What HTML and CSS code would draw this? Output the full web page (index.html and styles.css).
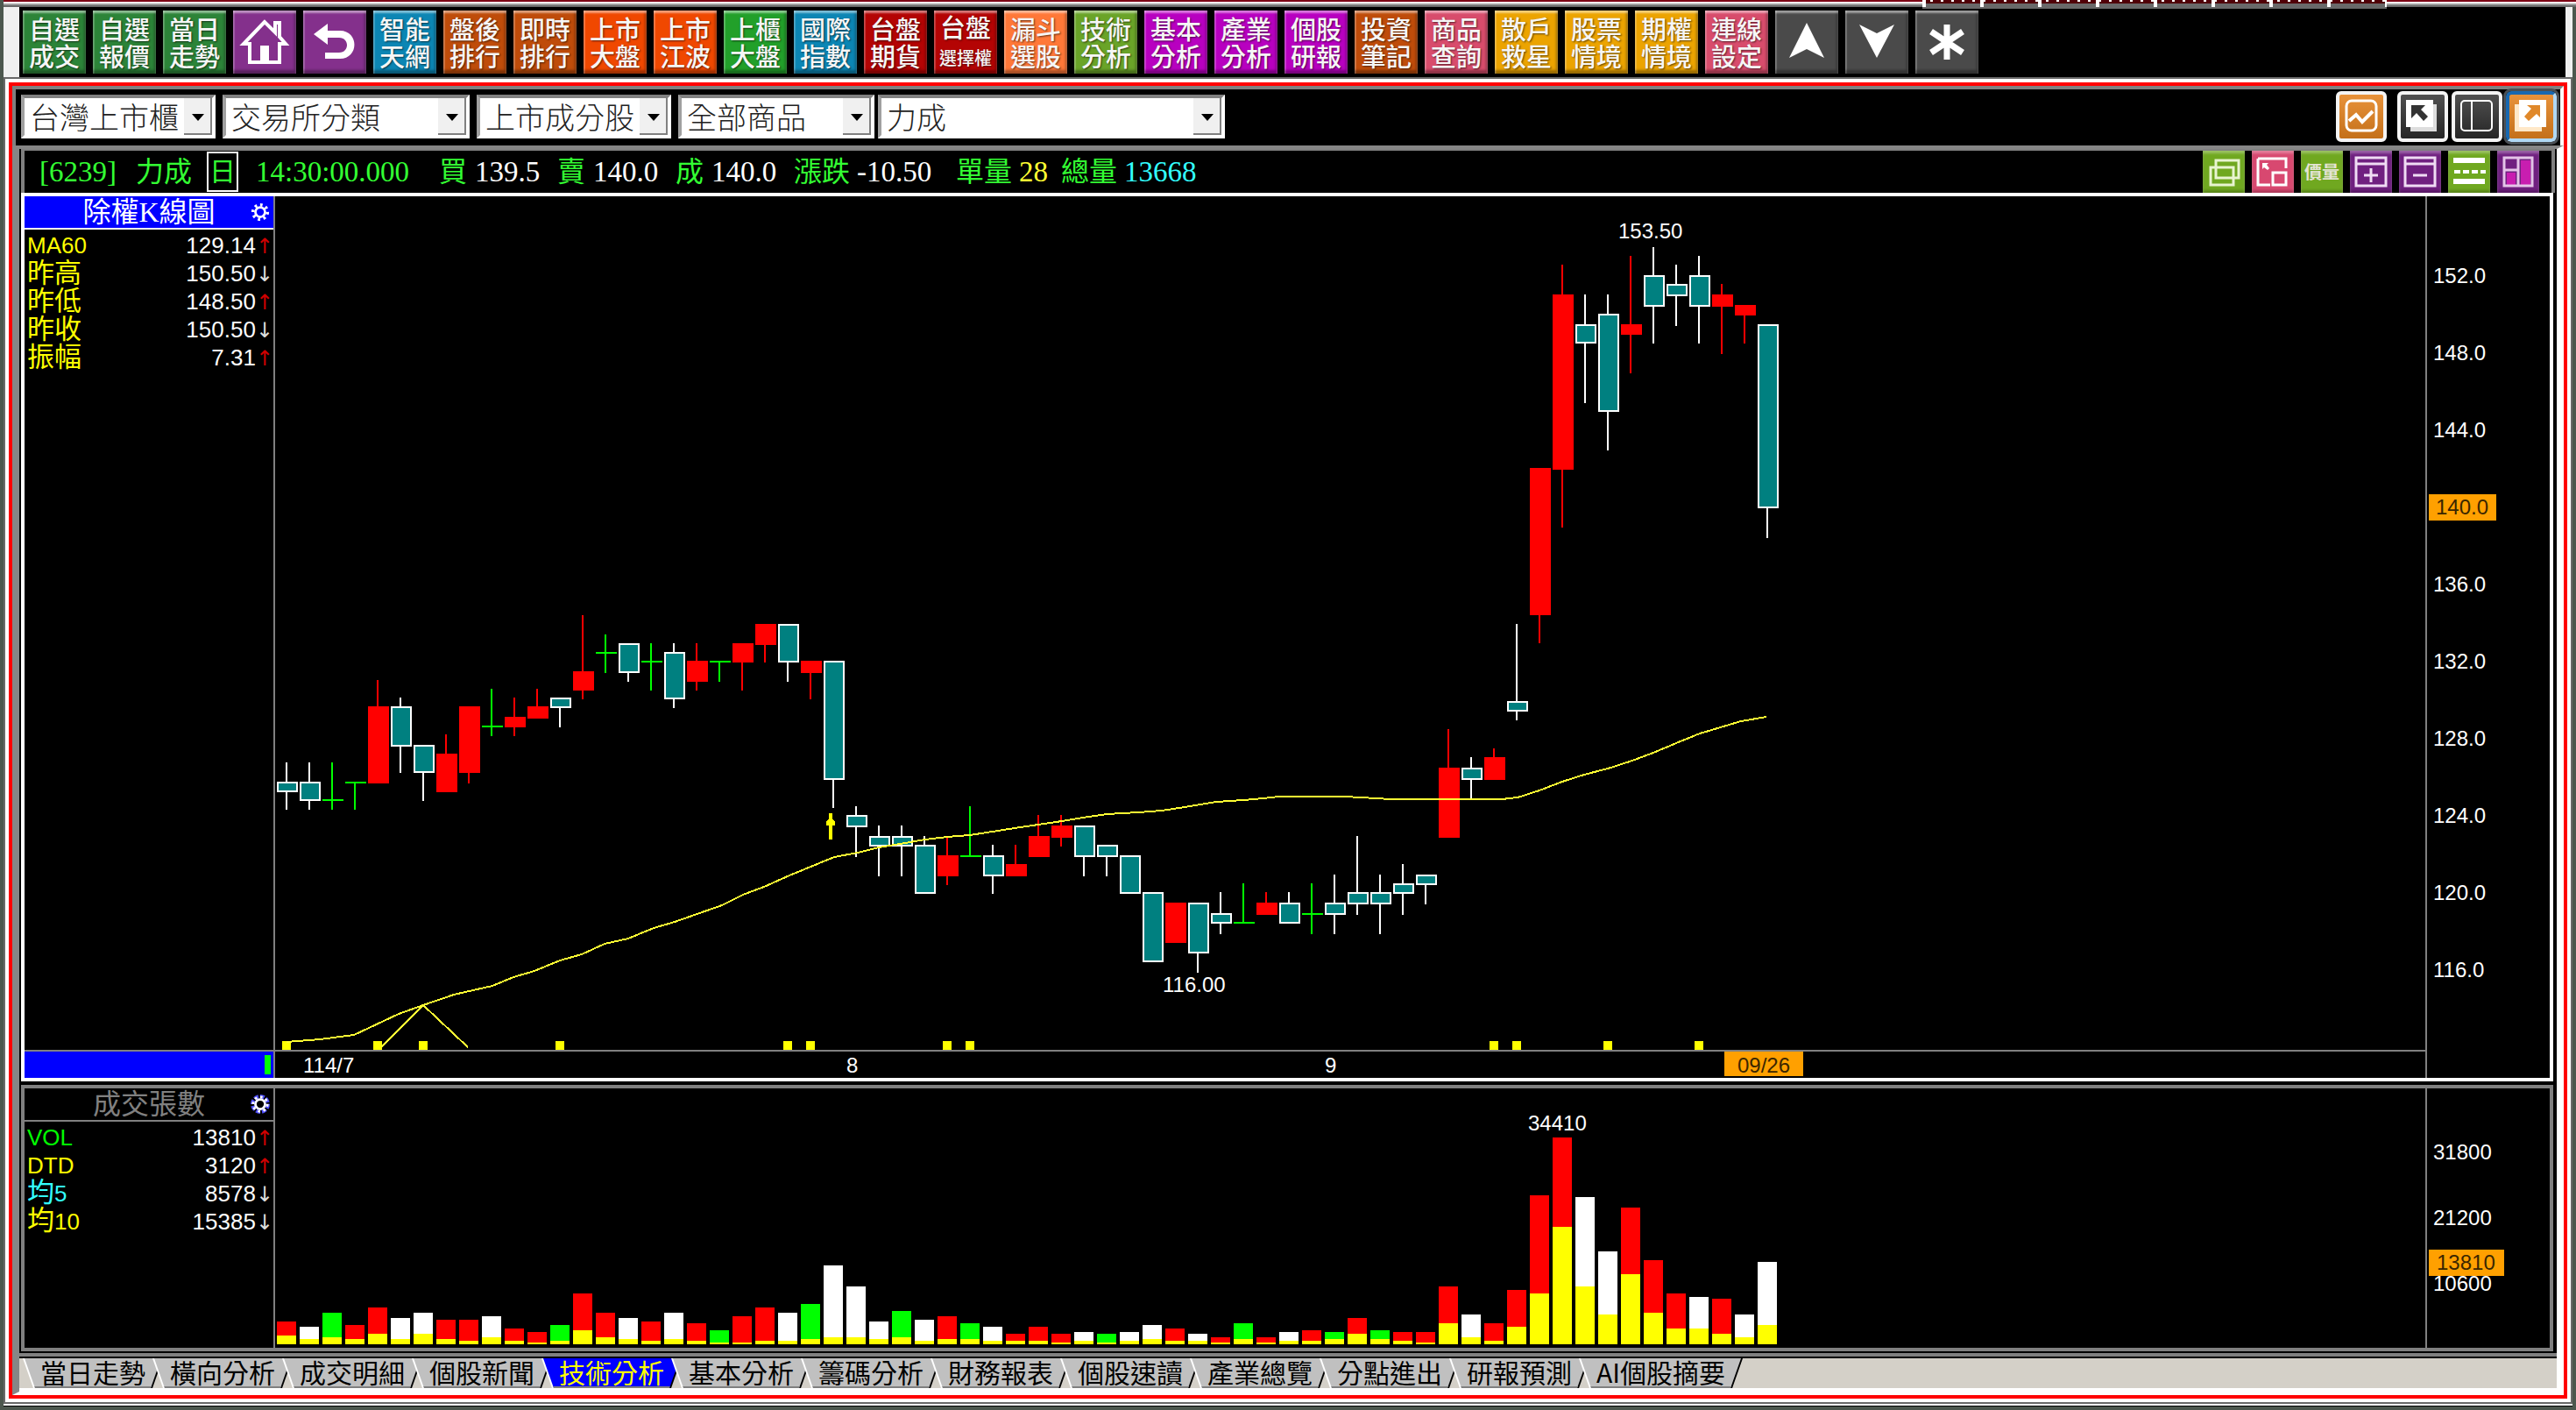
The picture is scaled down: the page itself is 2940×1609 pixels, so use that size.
FILE: index.html
```html
<!DOCTYPE html>
<html lang="zh-Hant">
<head>
<meta charset="utf-8">
<title>力成 技術分析</title>
<link rel="stylesheet" href="styles.css">
</head>
<body>
<div class="menu-edge"><div class="menu-tail"></div></div>

<nav class="toolbar" aria-label="功能列">
  <button class="tool green">自選<br>成交</button>
  <button class="tool green">自選<br>報價</button>
  <button class="tool green">當日<br>走勢</button>
  <button class="tool purple" aria-label="首頁"><svg viewBox="0 0 72 72"><path d="M36 13 12 38h7v21h34V38h7L53 30V14h-5v11Z" fill="none" stroke="#fff" stroke-width="4"/><path d="M31 40h10v17H31Z" fill="#fff"/></svg></button>
  <button class="tool purple" aria-label="返回"><svg viewBox="0 0 72 72"><path d="M12 27 28 15v8h14c22 0 22 32 0 32H25v-7h16c12 0 12-17 0-17H28v8Z" fill="#fff"/></svg></button>
  <button class="tool blue">智能<br>天網</button>
  <button class="tool brown">盤後<br>排行</button>
  <button class="tool brown">即時<br>排行</button>
  <button class="tool orange">上市<br>大盤</button>
  <button class="tool orange">上市<br>江波</button>
  <button class="tool lime">上櫃<br>大盤</button>
  <button class="tool blue">國際<br>指數</button>
  <button class="tool red">台盤<br>期貨</button>
  <button class="tool red">台盤<br><small>選擇權</small></button>
  <button class="tool coral">漏斗<br>選股</button>
  <button class="tool olive">技術<br>分析</button>
  <button class="tool magenta">基本<br>分析</button>
  <button class="tool magenta">產業<br>分析</button>
  <button class="tool magenta">個股<br>研報</button>
  <button class="tool brown">投資<br>筆記</button>
  <button class="tool pink">商品<br>查詢</button>
  <button class="tool amber">散戶<br>救星</button>
  <button class="tool amber">股票<br>情境</button>
  <button class="tool amber">期權<br>情境</button>
  <button class="tool pink">連線<br>設定</button>
  <button class="tool gray" aria-label="上一個"><svg viewBox="0 0 72 72"><path d="M36 14 56 54 36 44 16 54Z" fill="#fff"/></svg></button>
  <button class="tool gray" aria-label="下一個"><svg viewBox="0 0 72 72"><path d="M36 54 56 16 36 26 16 16Z" fill="#fff"/></svg></button>
  <button class="tool gray" aria-label="其他"><svg viewBox="0 0 72 72"><path d="M36 16v40M18 24l36 24M54 24 18 48" stroke="#fff" stroke-width="7"/></svg></button>
</nav>

<div class="window">
 <div class="window-inner">
  <div class="filters">
    <select class="combo combo-market" aria-label="市場"><option>台灣上市櫃</option></select>
    <select class="combo combo-class" aria-label="分類"><option>交易所分類</option></select>
    <select class="combo combo-board" aria-label="成分"><option>上市成分股</option></select>
    <select class="combo combo-goods" aria-label="商品範圍"><option>全部商品</option></select>
    <select class="combo combo-stock" aria-label="股票"><option>力成</option></select>
    <div class="window-tools">
      <button class="wtool wtool-amber wtool-apart" aria-label="走勢"><svg viewBox="0 0 50 50"><rect x="8" y="7" width="34" height="34" rx="6" fill="none" stroke="#fff" stroke-width="3"/><path d="m11 30 8-7 7 8 12-12" fill="none" stroke="#fff" stroke-width="4"/></svg></button>
      <button class="wtool" aria-label="取出視窗"><svg viewBox="0 0 50 50"><path d="M11 11h30v31H11Z" fill="#ddd"/><path d="M6 6h31v31H6Z" fill="#fff"/><path d="M12 12h16l-5 5 8 8-5 5-8-9-6 6Z" fill="#333"/></svg></button>
      <button class="wtool" aria-label="分割"><svg viewBox="0 0 50 50"><rect x="7" y="7" width="35" height="34" rx="4" fill="none" stroke="#fff" stroke-width="2"/><path d="M19 7v34" stroke="#fff" stroke-width="2"/></svg></button>
      <button class="wtool wtool-amber wtool-active" aria-label="放大視窗"><svg viewBox="0 0 50 50"><path d="M6 11h31v31H6Z" fill="#ffe8c8"/><path d="M11 6h31v31H11Z" fill="#fff"/><path d="M35 12H20l5 4-8 9 5 5 9-8 4 4Z" fill="#e0882a"/></svg></button>
    </div>
  </div>

  <div class="view">
    <div class="quote">
      <span class="q-code">[6239]</span>
      <span class="q-name">力成</span>
      <button class="q-period">日</button>
      <span class="q-time">14:30:00.000</span>
      <span class="q-key">買</span><span class="q-price">139.5</span>
      <span class="q-key">賣</span><span class="q-price">140.0</span>
      <span class="q-key">成</span><span class="q-price">140.0</span>
      <span class="q-key q-wide">漲跌</span><span class="q-change">-10.50</span>
      <span class="q-key q-wide">單量</span><span class="q-lot">28</span>
      <span class="q-key q-wide">總量</span><span class="q-total">13668</span>
      <div class="chart-tools">
        <button class="ctool leaf" aria-label="重疊"><svg viewBox="0 0 48 48"><g fill="none" stroke="#e8f4d0" stroke-width="3"><path d="M15 11h26v20H15Z"/><path d="M9 19h26v20H9Z"/></g></svg></button>
        <button class="ctool rose" aria-label="子圖"><svg viewBox="0 0 48 48"><path d="M7 9h32v11M7 9v30h14M24 25h15v14H24Z" fill="none" stroke="#fff" stroke-width="3"/><path d="M12 14h7l-2 2 3 4-2 2-4-3-2 2Z" fill="#fff"/></svg></button>
        <button class="ctool leaf ctool-text">價量</button>
        <button class="ctool violet" aria-label="增加"><svg viewBox="0 0 48 48"><path d="M7 8h34v32H7ZM7 15h34M24 20v16M16 28h16" fill="none" stroke="#f0dcf4" stroke-width="3"/></svg></button>
        <button class="ctool violet" aria-label="減少"><svg viewBox="0 0 48 48"><path d="M7 8h34v32H7ZM7 15h34M16 28h16" fill="none" stroke="#f0dcf4" stroke-width="3"/></svg></button>
        <button class="ctool leaf" aria-label="線型"><svg viewBox="0 0 48 48"><path d="M6 11h36M6 35h36" stroke="#fff" stroke-width="6"/><path d="M7 24h36" stroke="#fff" stroke-width="4" stroke-dasharray="7 3"/></svg></button>
        <button class="ctool violet" aria-label="版面"><svg viewBox="0 0 48 48"><path d="M11 25h10v14H11ZM27 11h11v28H27Z" fill="#c81eb0"/><path d="M8 8h32v32H8ZM24 8v32M8 22h16" fill="none" stroke="#e4c4e8" stroke-width="3"/></svg></button>
      </div>
    </div>

    <section class="panel panel-price">
      <div class="side">
        <header class="side-head side-head-active"><h2>除權K線圖</h2>
          <button class="gear" aria-label="K線設定"><svg viewBox="0 0 24 24"><circle cx="12" cy="12" r="6" fill="none" stroke="#fff" stroke-width="3"/><circle cx="12" cy="12" r="9" fill="none" stroke="#fff" stroke-width="4" stroke-dasharray="3 4"/></svg></button></header>
        <table class="values">
          <tr><th class="yellow">MA60</th><td>129.14</td><td class="dir up">↑</td></tr>
          <tr><th class="yellow cjk">昨高</th><td>150.50</td><td class="dir">↓</td></tr>
          <tr><th class="yellow cjk">昨低</th><td>148.50</td><td class="dir up">↑</td></tr>
          <tr><th class="yellow cjk">昨收</th><td>150.50</td><td class="dir">↓</td></tr>
          <tr><th class="yellow cjk">振幅</th><td>7.31</td><td class="dir up">↑</td></tr>
        </table>
        <div class="side-foot"><span class="thumb"></span></div>
      </div>
      <div class="plot">
        <svg class="price-chart" id="price-chart" role="img" aria-label="K線圖"></svg>
        <svg class="date-axis" role="img" aria-label="日期">
          <text x="32" y="24">114/7</text>
          <text x="652" y="24">8</text>
          <text x="1198" y="24">9</text>
          <rect x="1654" y="0" width="90" height="28"/>
          <text class="on-tag" x="1669" y="24">09/26</text>
        </svg>
      </div>
      <ol class="scale scale-price">
        <li>152.0</li><li>148.0</li><li>144.0</li><li><span class="tag">140.0</span></li><li>136.0</li>
        <li>132.0</li><li>128.0</li><li>124.0</li><li>120.0</li><li>116.0</li>
      </ol>
    </section>

    <section class="panel panel-volume">
      <div class="side">
        <header class="side-head"><h2>成交張數</h2>
          <button class="gear" aria-label="成交量設定"><svg viewBox="0 0 24 24"><circle cx="12" cy="12" r="9" fill="none" stroke="#5050ff" stroke-width="6" stroke-dasharray="5 2"/><circle cx="12" cy="12" r="6" fill="none" stroke="#fff" stroke-width="3"/><circle cx="12" cy="12" r="9" fill="none" stroke="#fff" stroke-width="3" stroke-dasharray="3 4"/></svg></button></header>
        <table class="values">
          <tr><th class="lime-text">VOL</th><td>13810</td><td class="dir up">↑</td></tr>
          <tr><th class="yellow">DTD</th><td>3120</td><td class="dir up">↑</td></tr>
          <tr><th class="cyan"><span class="cjk">均</span>5</th><td>8578</td><td class="dir">↓</td></tr>
          <tr><th class="yellow"><span class="cjk">均</span>10</th><td>15385</td><td class="dir">↓</td></tr>
        </table>
      </div>
      <div class="plot">
        <svg class="volume-chart" id="volume-chart" role="img" aria-label="成交張數圖"></svg>
      </div>
      <ol class="scale scale-volume">
        <li>31800</li><li>21200</li><li>10600</li>
        <li class="tag tag-volume">13810</li>
      </ol>
    </section>

    <nav class="tabs" aria-label="分頁">
      <button class="tab"><span>當日走勢</span></button>
      <button class="tab"><span>橫向分析</span></button>
      <button class="tab"><span>成交明細</span></button>
      <button class="tab"><span>個股新聞</span></button>
      <button class="tab tab-active"><span>技術分析</span></button>
      <button class="tab"><span>基本分析</span></button>
      <button class="tab"><span>籌碼分析</span></button>
      <button class="tab"><span>財務報表</span></button>
      <button class="tab"><span>個股速讀</span></button>
      <button class="tab"><span>產業總覽</span></button>
      <button class="tab"><span>分點進出</span></button>
      <button class="tab"><span>研報預測</span></button>
      <button class="tab"><span>AI個股摘要</span></button>
    </nav>
  </div>
 </div>
</div>
<div class="bottom-edge"></div>
<script src="chart.js"></script>
</body>
</html>
```
FILE: styles.css
```css
* { box-sizing: border-box; }

body {
  margin: 0;
  background: #4c574e;
  color: #fff;
  font-family: "Liberation Sans", "Noto Sans CJK TC", sans-serif;
}

button {
  margin: 0;
  padding: 0;
  border: 0;
  background: none;
  color: inherit;
  font: inherit;
  cursor: pointer;
}

svg { display: block; }

/* top edge */
.menu-edge {
  position: relative;
  height: 8px;
  margin-left: 4px;
  background: linear-gradient(#7c0014 0 2px, #fff 2px 4px, #a0a0a0 4px 6px, #696969 6px);
}

.menu-tail {
  position: absolute;
  top: 0;
  left: 2190px;
  width: 530px;
  height: 10px;
  border-bottom: 2px solid #696969;
  background:
    repeating-linear-gradient(90deg, #fff 0 4px, transparent 4px 66px),
    repeating-linear-gradient(90deg, transparent 0 9px, #fff 9px 12px) 0 0 / 100% 2px no-repeat,
    linear-gradient(#500008 0 4px, #696969 4px);
}

/* toolbar */
.toolbar {
  display: flex;
  gap: 8px;
  margin: 0 4px;
  padding: 4px 0 4px 4px;
  border-left: 18px solid #f0f0f0;
  border-right: 8px solid #f0f0f0;
  background: #000;
}

.tool {
  flex: none;
  width: 72px;
  height: 72px;
  color: #f6f6f6;
  font: 500 29px/31px "Noto Sans CJK TC", sans-serif;
  white-space: nowrap;
  text-shadow: 1px 1px 2px rgba(0, 0, 0, .6);
  box-shadow: inset 0 3px 2px rgba(255, 255, 255, .45), inset -2px -4px 3px rgba(0, 0, 0, .35), inset 2px 0 1px rgba(255, 255, 255, .2);
}

.tool small { font-size: 20px; }
.tool svg { width: 72px; height: 72px; }

.green { background: #2c8438; }
.purple { background: #84308c; }
.blue { background: #0c86b4; }
.brown { background: #bf4c0a; }
.orange { background: #f04800; }
.lime { background: #22a02a; }
.red { background: #b40404; }
.coral { background: #ff7838; }
.olive { background: #6aa428; }
.magenta { background: #b800c0; }
.pink { background: #d84c6c; }
.amber { background: #eca400; }
.gray { background: #4a4a4a; }

/* window frame */
.window {
  margin: 2px 6px 0;
  border: 4px solid #fff;
  outline: 2px solid #696969;
}

.window-inner {
  border: 4px solid #f00;
  background: #000;
}

.filters {
  display: flex;
  align-items: flex-start;
  border-top: 4px solid #808080;
  border-left: 4px solid #808080;
  border-right: 4px solid #fff;
  padding: 6px 4px 8px 6px;
}

.combo {
  appearance: none;
  height: 50px;
  margin: 0 8px 0 0;
  padding: 0 36px 0 6px;
  border: 4px solid #fff;
  border-top-color: #808080;
  border-left-color: #a0a0a0;
  border-radius: 0;
  background: #fff url("data:image/svg+xml,%3Csvg xmlns='http://www.w3.org/2000/svg' viewBox='0 0 32 42'%3E%3Cpath fill='%23808080' d='M0 0h32v42H0z'/%3E%3Cpath fill='%23f0f0f0' d='M0 0h30v40H0z'/%3E%3Cpath d='M9 18h14l-7 8z'/%3E%3C/svg%3E") right / 32px 42px no-repeat;
  color: #222;
  font: 300 34px/38px "Noto Sans CJK TC", sans-serif;
}

.combo-market { width: 222px; }
.combo-class { width: 282px; }
.combo-board { width: 222px; }
.combo-goods { width: 224px; margin-right: 4px; }
.combo-stock { width: 396px; }

.window-tools {
  display: flex;
  gap: 4px;
  margin: -6px 0 -4px auto;
  padding-top: 2px;
}

.wtool {
  width: 58px;
  height: 58px;
  border: 4px solid #f4f4f4;
  border-radius: 6px;
  background: linear-gradient(#505050, #262626);
}

.wtool svg { width: 50px; height: 50px; }
.wtool-amber { background: linear-gradient(#e8923a, #c4701a); }
.wtool-apart { margin-right: 8px; }
.wtool-active { border-color: #1868b0 #b0d8f4 #b0d8f4 #1868b0; outline: 3px solid #4a4f54; }

/* chart view */
.view {
  border: 4px solid #fff;
  border-top-color: #868686;
  border-left: 8px solid #868686;
  border-right-width: 8px;
}

.quote {
  display: flex;
  align-items: center;
  height: 50px;
  margin: 0 2px;
  padding-left: 17px;
  border: 4px solid #808080;
  border-top-width: 2px;
  border-bottom: 0;
  color: #fff;
  font: 33px/46px "Liberation Serif", "Noto Sans CJK TC", serif;
  white-space: nowrap;
}

.quote > span { flex: none; }
.q-code { width: 110px; color: #3f3; }
.q-name { width: 81px; color: #3f3; font-size: 32px; }
.q-period { width: 36px; height: 46px; border: 2px solid #fff; margin-right: 20px; color: #3f3; font-size: 30px; line-height: 40px; }
.q-time { width: 209px; color: #3f3; }
.q-key { width: 41px; color: #3f3; font-size: 32px; }
.q-price { width: 94px; }
.q-key.q-wide { width: 72px; }
.q-change { width: 113px; }
.q-lot { width: 48px; color: #ff3; }
.q-total { color: #3ff; }

.chart-tools {
  display: flex;
  gap: 8px;
  margin: 0 14px 0 auto;
}

.ctool {
  width: 48px;
  height: 48px;
  box-shadow: inset 0 3px 3px rgba(255, 255, 255, .3), inset 0 -3px 3px rgba(0, 0, 0, .2);
}

.leaf { background: #70a820; }
.rose { background: #d84870; }
.violet { background: #702080; }
.ctool-text { color: #e4e4d4; font: 700 20px/46px "Noto Sans CJK TC", sans-serif; }

/* panels */
.panel {
  display: grid;
  grid-template-columns: 286px 1fr 142px;
  margin: 0 4px 4px 2px;
  border: 4px solid #fff;
}

.panel-volume {
  margin-bottom: 2px;
  border-color: #808080;
}

.side {
  display: flex;
  flex-direction: column;
  border-right: 2px solid #808080;
}

.side-head {
  position: relative;
  height: 38px;
  border-bottom: 2px solid #808080;
  color: #808080;
}

.side-head-active { border-color: #fff; background: #00f; color: #fff; }

.side-head h2 {
  margin: 0;
  font: 32px/36px "Liberation Serif", "Noto Sans CJK TC", serif;
  text-align: center;
}

.gear { position: absolute; top: 7px; right: 4px; }
.gear svg { width: 22px; height: 22px; }

.values {
  margin-top: 2px;
  border-collapse: collapse;
  font-size: 26px;
  line-height: 32px;
}

.values tr { height: 32px; }
.values th { padding: 0 0 0 3px; font-weight: 400; text-align: left; }
.values td { padding: 0; text-align: right; }
.values .dir { width: 20px; color: #ddd; font: 24px/30px "Noto Sans", "DejaVu Sans", sans-serif; text-align: center; }
.values .up { color: #d00000; }
.values .cjk { font-size: 31px; line-height: 32px; }
.values span.cjk { line-height: 30px; }
.yellow { color: #ff0; }
.cyan { color: #3ff; }
.lime-text { color: #0f0; }

.side-foot {
  display: flex;
  justify-content: flex-end;
  height: 32px;
  margin-top: auto;
  padding: 4px 3px;
  border-top: 2px solid #808080;
  background: #00f;
}

.thumb { width: 7px; background: #0f0; }

.plot { min-width: 0; overflow: hidden; }
.plot svg { width: 100%; }
.price-chart { height: 974px; }
.volume-chart { height: 296px; }
.date-axis { height: 32px; border-top: 2px solid #808080; }
.plot text { fill: #fff; font-size: 24px; }
.date-axis rect { fill: #ffa000; }
.date-axis .on-tag { fill: #3a2600; }

.scale {
  position: relative;
  margin: 0;
  padding: 0 0 0 7px;
  border-left: 2px solid #808080;
  list-style: none;
  font-size: 24px;
}

.scale-price { padding-top: 47px; line-height: 88px; }
.scale-volume { padding-top: 35px; line-height: 75px; }

.tag {
  display: inline-block;
  margin-left: -5px;
  padding: 0 9px 0 8px;
  background: #ffa000;
  color: #3a2600;
  line-height: 30px;
}

.tag-volume { position: absolute; top: 184px; left: 7px; padding: 0 10px 0 9px; }

/* bottom tabs */
.tabs {
  display: flex;
  height: 44px;
  padding: 2px 0 0 4px;
  border-top: 4px solid #808080;
  border-bottom: 4px solid #fff;
  background: linear-gradient(#000 0 2px, #d4d0c8 2px);
}

.tab {
  flex: none;
  height: 34px;
  padding: 0 2px;
  background: linear-gradient(90deg, #fff 0 14px, #000 14px);
  clip-path: polygon(0 0, 100% 0, calc(100% - 12px) 100%, 12px 100%);
  color: #000;
  font: 30px/30px "Noto Sans CJK TC", sans-serif;
}

.tab + .tab { margin-left: -12px; }

.tab span {
  display: block;
  height: 34px;
  padding: 0 18px;
  background: #c0c0c0;
  box-shadow: inset 0 -2px #808080;
  clip-path: polygon(0 0, 100% 0, calc(100% - 12px) 100%, 12px 100%);
}

.tab-active { color: #ff0; }
.tab-active span { background: #00f; }

.bottom-edge {
  height: 5px;
  margin: 0 4px;
  background: linear-gradient(#696969 0 2px, #fff 2px 4px, #000 4px);
}
```
FILE: chart.js
```js
// Bars are spaced 26px apart; vertical values are screen rows, the price pane starts at row 224.
const STEP = 26;
const PANE_TOP = 224;
const NS = 'http://www.w3.org/2000/svg';

// R = rise, W = fall, G = flat: [kind, high, body top, body bottom, low]
const candles = [
  ['W',870,892,904,924],['W',870,892,914,924],['G',870,912,914,924],['G',892,892,894,924],
  ['R',776,806,894,894],['W',796,806,852,882],['W',850,850,882,914],['R',838,860,904,904],
  ['R',806,806,882,894],['G',786,828,830,840],['R',796,818,830,840],['R',786,806,820,820],
  ['W',796,796,808,830],['R',702,766,788,798],['G',724,744,746,768],['W',734,734,768,778],
  ['G',734,754,756,788],['W',734,744,798,808],['R',734,754,778,788],['G',754,754,756,778],
  ['R',734,734,756,788],['R',712,712,736,756],['W',712,712,756,778],['R',754,754,768,798],
  ['W',754,754,890,922],['W',920,930,944,978],['W',942,954,966,1000],['W',942,954,966,1000],
  ['W',954,964,1020,1020],['R',956,976,1000,1010],['G',920,976,978,978],['W',964,976,1000,1020],
  ['R',964,986,1000,1000],['R',930,954,978,978],['R',930,942,956,966],['W',942,942,978,1000],
  ['W',964,964,978,1000],['W',976,976,1020,1020],['W',1018,1018,1098,1098],['R',1030,1030,1076,1076],
  ['W',1030,1030,1088,1110],['W',1018,1042,1054,1066],['G',1008,1052,1054,1054],['R',1018,1030,1044,1044],
  ['W',1018,1030,1054,1054],['G',1008,1042,1044,1066],['W',998,1030,1044,1066],['W',954,1018,1032,1044],
  ['W',998,1018,1032,1066],['W',986,1008,1020,1044],['W',998,998,1010,1032],['R',832,876,956,956],
  ['W',864,876,890,912],['R',854,864,890,890],['W',712,800,812,822],['R',534,534,702,734],
  ['R',302,336,536,602],['W',336,370,392,460],['W',336,358,470,514],['R',292,370,382,426],
  ['W',282,314,350,392],['W',302,324,338,372],['W',292,314,350,392],['R',324,336,350,404],
  ['R',348,348,360,392],['W',370,370,580,614]
];

// [kind, bar height, day-trade height]
const volumes = [
  ['R',26,10],['W',20,6],['G',36,8],['R',22,6],['R',42,12],['W',30,6],['W',36,12],['R',28,6],['R',28,4],
  ['W',32,8],['R',18,4],['R',14,2],['G',22,4],['R',58,16],['R',36,8],['W',30,6],['R',26,4],['W',36,6],
  ['R',24,4],['G',16,2],['R',32,2],['R',42,4],['W',36,4],['G',46,6],['W',90,8],['W',66,8],['W',26,6],
  ['G',38,8],['W',28,4],['R',32,6],['G',24,6],['W',20,4],['R',12,4],['R',20,4],['R',12,2],['W',14,4],
  ['G',12,2],['W',14,4],['W',22,6],['R',18,4],['W',12,4],['R',8,2],['G',24,6],['R',8,2],['W',14,4],
  ['R',16,4],['G',14,6],['R',30,12],['G',16,6],['R',14,4],['R',14,2],['R',66,24],['W',34,8],['R',24,4],
  ['R',62,20],['R',170,58],['R',236,134],['W',168,66],['W',106,34],['R',156,80],['R',96,36],['R',58,18],
  ['W',54,18],['R',52,12],['W',34,8],['W',94,22]
];

const ma60 = [
  [327,1189],[365,1186],[404,1181],[455,1157],[483,1147],[518,1135],[562,1125],[586,1115],[610,1108],
  [639,1096],[664,1089],[690,1077],[717,1071],[746,1059],[770,1052],[824,1033],[848,1021],[872,1012],
  [901,999],[952,978],[979,973],[1003,967],[1027,963],[1056,958],[1081,955],[1107,953],[1158,945],
  [1185,941],[1212,937],[1236,933],[1263,929],[1299,927],[1326,925],[1352,921],[1388,915],[1419,913],
  [1442,911],[1460,909],[1535,909],[1588,912],[1714,912],[1732,910],[1757,902],[1783,892],[1808,884],
  [1835,877],[1860,869],[1887,859],[1913,848],[1940,837],[1967,829],[1987,823],[2016,818]
];
const eventBars = [0, 4, 6, 12, 22, 23, 29, 30, 53, 54, 58, 62];
const PANE_LEFT = 314;
const colors = { R: '#f00', W: '#fff', G: '#0f0' };

function add(parent, name, attrs, text) {
  const node = document.createElementNS(NS, name);
  for (const key in attrs) node.setAttribute(key, attrs[key]);
  if (text) node.textContent = text;
  parent.appendChild(node);
}
function box(parent, x, y, width, height, fill) {
  add(parent, 'rect', { x, y, width, height, fill });
}
function points(list) {
  return list.map(([x, y]) => (x - PANE_LEFT) + ',' + (y - PANE_TOP)).join(' ');
}

const price = document.getElementById('price-chart');
price.setAttribute('shape-rendering', 'crispEdges');
candles.forEach(([kind, high, top, bottom, low], i) => {
  const x = 2 + i * STEP;
  box(price, x + 10, high - PANE_TOP, 2, low - high, colors[kind]);
  box(price, x, top - PANE_TOP, 24, bottom - top, colors[kind]);
  if (kind === 'W') box(price, x + 2, top - PANE_TOP + 2, 20, bottom - top - 4, '#008080');
});
eventBars.forEach(i => box(price, 8 + i * STEP, 964, 10, 10, '#ff0'));
add(price, 'polyline', { points: points(ma60), fill: 'none', stroke: '#ff3', 'stroke-width': 2 });
add(price, 'polyline', { points: points([[435,1195],[483,1147],[534,1195]]), fill: 'none', stroke: '#ff3', 'stroke-width': 2 });
add(price, 'path', { d: 'M632 704h4v6l3 4v4h-3v16h-4v-16h-3v-4l3-4Z', fill: '#ff0' });
add(price, 'text', { x: 1533, y: 48 }, '153.50');
add(price, 'text', { x: 1013, y: 908 }, '116.00');

const volume = document.getElementById('volume-chart');
volumes.forEach(([kind, total, dayTrade], i) => {
  const x = 2 + i * STEP;
  box(volume, x, 292 - total, 22, total, colors[kind]);
  box(volume, x, 292 - dayTrade, 22, dayTrade, '#ff0');
});
add(volume, 'text', { x: 1430, y: 48 }, '34410');
```
